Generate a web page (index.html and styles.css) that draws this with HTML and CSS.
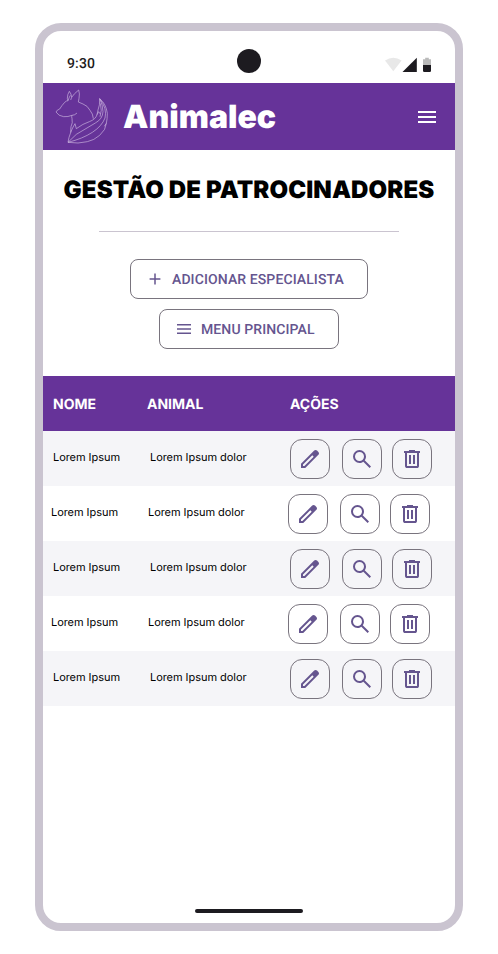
FILE: index.html
```html
<!DOCTYPE html>
<html lang="pt">
<head>
<meta charset="utf-8">
<title>Animalec</title>
<link rel="stylesheet" href="styles.css">
</head>
<body>
<svg width="0" height="0" class="sprite">
  <symbol id="edit" viewBox="0 0 24 24"><path fill-rule="evenodd" d="M3 21v-4.250L16.200 3.575q.6-.6 1.400-.6t1.400.6l1.400 1.400q.6.6.6 1.400t-.6 1.400L7.250 21ZM5 19h1.400l9.300-9.300-1.400-1.400L5 17.600Z"/></symbol>
  <symbol id="search" viewBox="0 0 24 24"><path d="m19.6 21-6.3-6.3q-.75.6-1.725.95T9.5 16q-2.725 0-4.612-1.888T3 9.5q0-2.725 1.888-4.612T9.5 3q2.725 0 4.612 1.888T16 9.5q0 1.1-.35 2.075T14.7 13.3l6.3 6.3-1.4 1.4ZM9.5 14q1.875 0 3.188-1.312T14 9.5q0-1.875-1.312-3.188T9.5 5Q7.625 5 6.312 6.312T5 9.5q0 1.875 1.312 3.188T9.5 14Z"/></symbol>
  <symbol id="delete" viewBox="0 0 24 24"><path d="M7 21q-.825 0-1.412-.587T5 19V6H4V4h5V3h6v1h5v2h-1v13q0 .825-.587 1.413T17 21H7ZM17 6H7v13h10V6ZM9 17h2V8H9v9Zm4 0h2V8h-2v9Z"/></symbol>
</svg>
<div class="phone">
  <div class="status">
    <span class="time">9:30</span>
    <span class="camera"></span>
    <svg class="signals" width="48" height="16" viewBox="0 0 48 16">
      <path d="M1 3.6Q9.300-2 17.600 3.6L9.300 14.3Z" fill="#e8e8e8"/>
      <path d="M32.800 .8V15H18.500Z" fill="#1d1b20"/>
      <path d="M39 2.2h2.2V.8h3.6v1.4H47V8h-8Z" fill="#bababa"/>
      <path d="M39 8h8v5.8q0 1.2-1.2 1.2h-5.6Q39 15 39 13.800Z" fill="#1d1b20"/>
    </svg>
  </div>
  <header class="topbar">
    <svg class="logo" width="65" height="65" viewBox="0 0 195 195">
      <path d="M81 87Q74 94 66 94Q54 99 41 98Q25 96 18 84Q20 78 29 75Q35 65 44 55Q49 50 54 50L52 43Q52 31 58 22Q64 29 65 40Q72 29 86 18Q90 29 87 43L85 54L99 60Q113 65 120 79Q129 89 130 104"/>
      <path d="M65 40L62 48M54 50Q57 41 61 34M66 94Q64 98 66 103Q69 117 63 128Q62 136 62 146Q56 160 54 175"/>
      <path d="M62 146Q66 134 71 126L75 119L79 134Q99 119 118 113Q137 106 141 92L144 78Q150 64 149 44Q168 59 172 88Q172 105 169 118Q168 137 149 154Q132 169 112 173Q85 180 54 175"/>
      <path d="M149 44Q159 64 159 83Q158 105 136 117L79 151L54 175M149 44Q172 74 165 102Q156 126 127 145Q98 164 54 175M151 58Q157 80 150 98M141 92L146 83L151 90M169 118L163 127"/>
    </svg>
    <span class="brand">Animalec</span>
    <svg class="burger" width="18" height="12" viewBox="0 0 18 12"><path d="M0 0h18v2H0zM0 5h18v2H0zM0 10h18v2H0z" fill="#fff"/></svg>
  </header>
  <main>
    <h1>GESTÃO DE PATROCINADORES</h1>
    <div class="rule"></div>
    <div class="actions">
      <button class="wide add"><svg width="20" height="20" viewBox="0 0 20 20"><path d="M9.250 4.600h1.500v4.650h4.650v1.500h-4.650v4.650h-1.500v-4.650H4.600v-1.500h4.650z"/></svg><span>ADICIONAR ESPECIALISTA</span></button>
      <button class="wide menu"><svg width="20" height="20" viewBox="0 0 20 20"><path d="M3 5h14v1.500H3zM3 9.250h14v1.500H3zM3 13.500h14V15H3z"/></svg><span>MENU PRINCIPAL</span></button>
    </div>
    <div class="table">
      <div class="row head"><span>NOME</span><span>ANIMAL</span><span>AÇÕES</span></div>
      <div class="row"><span>Lorem Ipsum</span><span>Lorem Ipsum dolor</span><div class="tools"><button><svg><use href="#edit"/></svg></button><button><svg><use href="#search"/></svg></button><button><svg><use href="#delete"/></svg></button></div></div>
      <div class="row even"><span>Lorem Ipsum</span><span>Lorem Ipsum dolor</span><div class="tools"><button><svg><use href="#edit"/></svg></button><button><svg><use href="#search"/></svg></button><button><svg><use href="#delete"/></svg></button></div></div>
      <div class="row"><span>Lorem Ipsum</span><span>Lorem Ipsum dolor</span><div class="tools"><button><svg><use href="#edit"/></svg></button><button><svg><use href="#search"/></svg></button><button><svg><use href="#delete"/></svg></button></div></div>
      <div class="row even"><span>Lorem Ipsum</span><span>Lorem Ipsum dolor</span><div class="tools"><button><svg><use href="#edit"/></svg></button><button><svg><use href="#search"/></svg></button><button><svg><use href="#delete"/></svg></button></div></div>
      <div class="row"><span>Lorem Ipsum</span><span>Lorem Ipsum dolor</span><div class="tools"><button><svg><use href="#edit"/></svg></button><button><svg><use href="#search"/></svg></button><button><svg><use href="#delete"/></svg></button></div></div>
    </div>
  </main>
  <div class="home"></div>
</div>
</body>
</html>
```
FILE: styles.css
```css
* { box-sizing: border-box; }
body { margin: 0; height: 954px; padding: 23px 35px; background: #fff; font-family: Inter, sans-serif; text-rendering: geometricPrecision; overflow: hidden; }
.sprite { display: block; }
button { margin: 0; padding: 0; font: inherit; text-rendering: inherit; background: none; border: 1px solid #79747e; color: #65558f; }
.phone { width: 428px; height: 908px; border: 8px solid #cac4d0; border-radius: 26px; background: #fff; display: flex; flex-direction: column; overflow: hidden; }
.status { height: 52px; flex: none; display: grid; grid-template-columns: 170px 24px 1fr; align-items: start; padding: 18px 23px 0 24px; }
.time { font: 500 14px/20px Roboto, sans-serif; letter-spacing: .14px; color: #1d1b20; padding-top: 5px; }
.camera { width: 24px; height: 24px; border-radius: 50%; background: #1d1b20; }
.signals { justify-self: end; margin-top: 8px; }
.topbar { height: 67px; flex: none; background: #663399; display: flex; align-items: center; padding: 0 19px 0 7px; }
.logo { flex: none; fill: none; stroke: #cbb5e0; stroke-width: 2; stroke-linejoin: round; }
.brand { margin-left: 8px; padding-top: 1px; font-size: 32px; font-weight: 900; color: #fff; line-height: 40px; }
.burger { margin-left: auto; }
h1 { margin: 25px 0 0; font-size: 24px; line-height: 30px; font-weight: 900; letter-spacing: .12px; text-align: center; color: #000; white-space: nowrap; }
.rule { width: 300px; height: 1px; margin: 26px auto 27px; background: #cac4d0; }
.actions { display: flex; flex-direction: column; align-items: center; gap: 10px; }
.wide { height: 40px; border-radius: 8px; display: flex; align-items: center; gap: 7px; padding-left: 14px; font: 500 14px/20px Roboto, sans-serif; letter-spacing: .1px; white-space: nowrap; }
.wide span { padding-top: 2px; }
.add { width: 238px; }
.menu { width: 180px; }
svg { fill: #65558f; }
.table { margin-top: 27px; }
.row { height: 55px; display: grid; grid-template-columns: 97px 140px 1fr; padding: 0 0 0 10px; align-items: center; background: #f5f5f8; font-size: 11px; letter-spacing: -.05px; color: #000; }
.row > span { padding-bottom: 3px; white-space: nowrap; }
.row.even { background: #fff; padding-left: 8px; }
.row.head { grid-template-columns: 94px 143px 1fr; background: #663399; color: #fff; font-size: 14px; font-weight: 700; letter-spacing: 0; }
.row.head > span { padding: 2px 0 0; }
.tools { display: flex; padding-top: 1px; }
.tools button { width: 40px; height: 40px; border-radius: 12px; display: grid; place-items: center; }
.tools button + button { margin-left: 12px; }
.tools button:last-child { margin-left: 10px; }
.tools svg { width: 24px; height: 24px; }
.home { width: 108px; height: 4px; border-radius: 2px; background: #1d1b20; margin: auto auto 10px; }
```
